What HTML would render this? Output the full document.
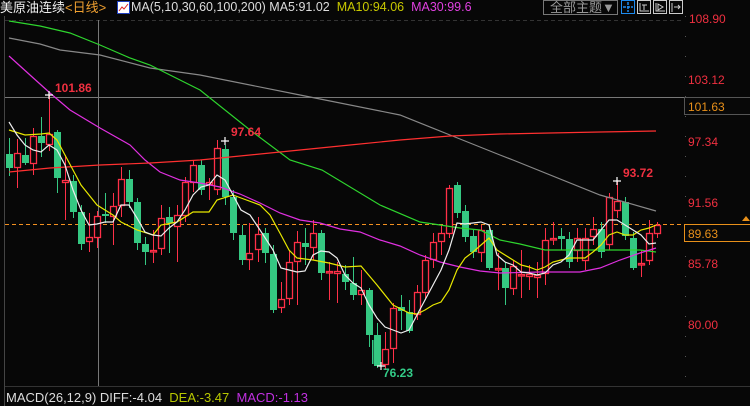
<!DOCTYPE html>
<html><head><meta charset="utf-8"><style>
html,body{margin:0;padding:0;background:#070707;width:750px;height:406px;overflow:hidden;font-family:"Liberation Sans","Noto Sans CJK SC",sans-serif}
svg{position:absolute;left:0;top:0}
.t{position:absolute;font-size:13px;white-space:nowrap;line-height:15px}
</style></head><body>
<svg id="s" width="750" height="406" xmlns="http://www.w3.org/2000/svg">
<line x1="4.5" y1="16" x2="4.5" y2="406" stroke="#444"/>
<line x1="5" y1="20.5" x2="684" y2="20.5" stroke="#333" stroke-dasharray="4,3"/>
<line x1="685.5" y1="16" x2="685.5" y2="386" stroke="#555" stroke-dasharray="1,19"/>
<line x1="5" y1="386.5" x2="750" y2="386.5" stroke="#333"/>
<line x1="98.5" y1="20" x2="98.5" y2="386" stroke="#777"/>
<line x1="5" y1="97.5" x2="684" y2="97.5" stroke="#777"/>
<line x1="5" y1="224.5" x2="745" y2="224.5" stroke="#f39020" stroke-dasharray="4,3"/>
<rect x="372" y="340" width="1.5" height="24" fill="#3c8"/>
<g id="c"></g>
<g fill="none" stroke-width="1.2">
<polyline stroke="#888" points="9,38 40,44 60,50 100,55 150,68 200,75 300,95 400,115 450,135 500,155 513,160 600,195 656,211"/>
<polyline stroke="#2ed52e" points="9,21 40,26 70,33 100,45 130,58 150,65 200,90 250,130 290,160 322,170 380,205 420,222 440,225 460,228 480,230 500,240 520,244 545,250 600,250 640,250 656,252"/>
<polyline stroke="#e030e0" points="9,56 30,75 50,93 70,110 100,128 130,145 145,160 160,172 180,180 200,183 220,187 240,194 260,203 280,213 300,220 320,223 340,229 360,232 380,240 400,246 420,255 440,262 460,267 480,271 500,273 540,272 580,272 600,268 620,260 640,253 656,248"/>
<polyline stroke="#ff3030" points="9,172 50,168 100,165 150,163 200,160 250,155 300,150 350,145 400,140 450,136 500,134 550,133 600,132 656,131"/>
<polyline stroke="#e8e800" points="9,130 25,135 41,134 49,133 57,140 65,155 73,170 81,185 89,195 97,205 113,215 121,222 137,230 153,235 161,225 177,222 193,212 209,212 217,200 233,195 241,198 260,205 270,215 281,235 289,250 297,258 313,260 329,263 345,267 361,266 377,285 393,305 409,313 417,314 425,310 433,305 441,302 449,290 457,270 465,258 473,252 481,245 489,238 497,250 505,255 513,260 521,265 529,267 537,270 545,267 553,262 561,260 569,258 585,258 593,252 601,245 609,235 617,232 625,235 633,235 641,230 649,228 656,225"/>
<polyline stroke="#eee" points="9,122 17,135 25,145 33,150 41,152 49,145 57,150 65,165 73,190 81,210 89,225 97,224 105,222 113,222 121,205 129,205 137,218 145,232 153,235 161,236 169,228 177,222 185,210 193,195 201,187 209,185 217,175 225,180 233,195 241,210 250,215 260,230 273,250 281,268 289,270 297,272 305,271 313,255 321,251 329,252 337,258 345,275 353,283 361,288 369,305 377,318 385,327 393,330 401,333 409,330 417,315 425,300 433,285 441,270 449,250 457,223 465,224 473,223 481,222 489,225 497,255 505,262 513,265 521,272 529,273 537,275 545,273 553,265 561,262 569,255 577,240 593,240 601,230 609,220 617,220 625,225 633,230 641,235 649,244 656,243"/>
</g>
<g stroke="#fff" stroke-width="1.2"><path d="M45 95h8M49 91v8M221 141h8M225 137v8M613 181h8M617 177v8M377 366h8M381 362v8"/></g>
<g font-family="Liberation Sans,sans-serif" font-size="12" font-weight="bold" fill="#f03040">
<text x="55" y="92">101.86</text><text x="231" y="136">97.64</text><text x="623" y="177">93.72</text>
<text x="383" y="377" fill="#3c8">76.23</text></g>
<g font-family="Liberation Sans,sans-serif" font-size="12" fill="#f03040">
<text x="689" y="23">108.90</text><text x="688" y="84">103.12</text><text x="688" y="146">97.34</text><text x="688" y="207">91.56</text><text x="688" y="268">85.78</text><text x="688" y="329">80.00</text></g>
<rect x="684.5" y="97.5" width="70" height="17" fill="#080808" stroke="#555"/>
<text x="688" y="111" font-size="12" fill="#e8901a" font-family="Liberation Sans,sans-serif">101.63</text>
<rect x="684.5" y="224.5" width="70" height="17" fill="#080808" stroke="#e8901a"/>
<text x="688" y="238" font-size="12" fill="#e8901a" font-family="Liberation Sans,sans-serif">89.63</text>
<path d="M742 221l4-5 4 5z" fill="#e8901a"/>
<rect x="543.5" y="0.5" width="74" height="14" fill="none" stroke="#777"/>
<g fill="none" stroke="#ccc"><rect x="637.5" y="0.5" width="13" height="13"/><rect x="653.5" y="0.5" width="13" height="13"/><rect x="669.5" y="0.5" width="13" height="13"/></g>
<rect x="621.5" y="0.5" width="13" height="13" fill="none" stroke="#1e8cf0"/>
<path d="M628 2v10M623 7h10" stroke="#1e8cf0" stroke-width="1.5" stroke-dasharray="3,1"/>
<path d="M640 3v8h9M642 5h5M644 5v5M656 3v8h9M658 4l5 3-5 3zM672 3v9M674 7h6M678 5l2 2-2 2" stroke="#ccc" fill="none"/>
<rect x="117.5" y="1.5" width="12" height="12" fill="#fff" stroke="#2040c0"/>
<path d="M119 11l3-4 2 2 4-5" stroke="#e02020" fill="none"/>
</svg>
<div class="t" style="left:0;top:0;color:#eee">美原油连续<span style="color:#f0a030">&lt;日线&gt;</span></div>
<div class="t" style="left:131px;top:0;color:#ddd;font-size:12.5px">MA(5,10,30,60,100,200) MA5:91.02 <span style="color:#c8c800">&nbsp;MA10:94.06</span> <span style="color:#e040e0">&nbsp;MA30:99.6</span></div>
<div class="t" style="left:550px;top:0;color:#999">全部主题▼</div>
<div class="t" style="left:6px;top:390px;color:#ddd">MACD(26,12,9) DIFF:-4.04 <span style="color:#b8c800">&nbsp;DEA:-3.47</span> <span style="color:#c030e0">&nbsp;MACD:-1.13</span></div>
<script>
var d=[
[9,'g',154,168,138,176],[17,'r',153,167,139,188],[25,'g',155,163,138,165],[33,'r',136,163,128,175],[41,'g',136,143,117,157],[49,'r',134,144,95,151],[57,'g',132,178,130,193],[65,'r',180,182,155,220],[73,'g',181,212,175,218],[81,'g',212,244,205,250],[89,'r',237,241,213,252],[97,'r',216,237,211,248],[105,'g',214,216,193,223],[113,'r',206,216,193,245],[121,'r',179,205,167,217],[129,'g',179,202,170,208],[137,'g',202,243,198,250],[145,'g',244,252,237,265],[153,'r',250,251,230,263],[161,'r',218,248,205,255],[169,'g',217,223,207,253],[177,'r',215,226,205,262],[185,'r',182,215,177,222],[193,'r',165,182,161,192],[201,'g',165,190,160,195],[209,'r',182,184,178,200],[217,'r',148,189,140,195],[225,'g',149,197,145,205],[233,'g',197,233,190,240],[242,'g',235,260,225,265],[249,'r',253,259,223,270],[258,'r',234,249,217,262],[265,'g',233,253,228,263],[273,'g',254,310,245,313],[281,'r',299,307,282,313],[289,'r',262,298,250,305],[297,'r',242,261,231,305],[305,'g',243,247,228,265],[313,'r',233,247,220,260],[321,'g',233,273,230,280],[329,'r',271,272,262,300],[337,'r',271,273,262,303],[345,'g',274,282,265,290],[353,'g',283,295,257,300],[361,'r',290,294,270,305],[369,'g',290,335,288,347],[377,'g',335,366,323,368],[385,'r',349,364,332,370],[393,'r',308,348,303,363],[401,'g',307,311,295,330],[409,'g',312,331,300,333],[417,'r',292,314,285,320],[425,'r',260,292,255,300],[433,'r',242,259,233,268],[441,'r',233,241,225,255],[449,'r',188,233,185,238],[457,'g',185,213,182,218],[465,'g',211,237,205,242],[473,'g',236,252,230,258],[481,'r',230,252,225,262],[489,'g',230,268,225,270],[498,'r',268,269,253,290],[505,'g',268,288,262,305],[513,'r',266,288,260,295],[521,'r',274,275,250,298],[529,'r',274,276,265,290],[537,'r',275,277,262,298],[545,'r',240,273,228,285],[553,'r',238,239,222,245],[561,'g',236,239,228,250],[569,'g',239,262,232,268],[577,'r',238,250,228,262],[585,'r',238,260,228,270],[593,'r',229,236,217,245],[601,'g',229,252,222,258],[609,'r',197,244,193,250],[617,'r',201,210,181,218],[625,'g',202,236,197,240],[633,'g',238,268,232,270],[641,'r',263,264,250,277],[649,'r',233,260,220,265],[657,'r',225,233,222,238]];
var h='';d.forEach(function(c){var x=c[0],col=c[1]=='r'?'#ff3048':'#35c882',t=Math.min(c[2],c[3]),b=Math.max(c[2],c[3]);if(b-t<1.5)b=t+1.5;
h+='<line x1="'+(x+.5)+'" y1="'+c[4]+'" x2="'+(x+.5)+'" y2="'+c[5]+'" stroke="'+col+'"/>';
if(c[1]=='r')h+='<rect x="'+(x-2.5)+'" y="'+(t+.5)+'" width="6" height="'+(b-t)+'" fill="#070707" stroke="'+col+'" stroke-width="1.3"/>';
else h+='<rect x="'+(x-3)+'" y="'+t+'" width="7" height="'+(b-t)+'" fill="'+col+'"/>';});
document.getElementById('c').innerHTML=h;
</script>
</body></html>
